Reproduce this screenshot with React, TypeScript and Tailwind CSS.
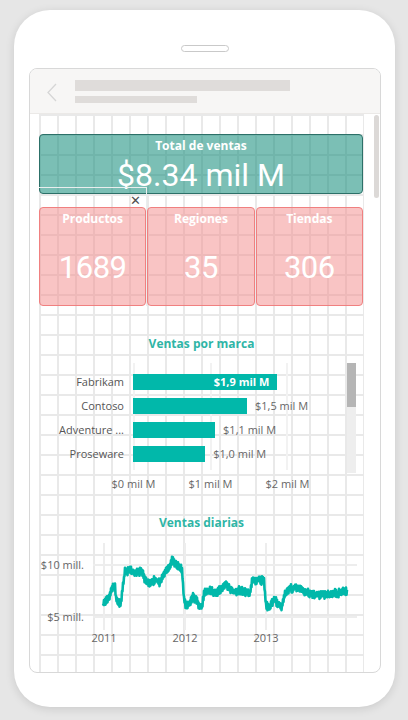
import React from "react";

const bars = [
  { name: "Fabrikam", value: 1.9, label: "$1,9 mil M" },
  { name: "Contoso", value: 1.5, label: "$1,5 mil M" },
  { name: "Adventure ...", value: 1.08, label: "$1,1 mil M" },
  { name: "Proseware", value: 0.95, label: "$1,0 mil M" },
];

const kpis = [
  { title: "Productos", value: "1689" },
  { title: "Regiones", value: "35" },
  { title: "Tiendas", value: "306" },
];

// rough shape of the daily sales line, in page pixels
const keys: [number, number][] = [
  [103, 604], [106, 601], [109, 598], [111, 592], [113, 586], [115, 588], [116, 598], [118, 603], [121, 603],
  [123, 585], [125, 572], [130, 570], [135, 573], [140, 571], [143, 574], [146, 581], [150, 584], [155, 580],
  [160, 583], [163, 576], [166, 571], [170, 566], [172, 559], [175, 563], [178, 566], [182, 570], [184, 600],
  [186, 606], [190, 603], [193, 597], [196, 600], [199, 606], [202, 607], [204, 593], [210, 591], [216, 593],
  [222, 588], [226, 584], [230, 589], [235, 592], [240, 590], [245, 592], [250, 593], [252, 580], [258, 580],
  [264, 581], [266, 605], [270, 607], [274, 599], [278, 604], [282, 607], [285, 592], [290, 589], [296, 587],
  [300, 589], [305, 592], [310, 594], [320, 595], [330, 594], [340, 593], [344, 590], [347, 593],
];

function buildLine() {
  let seed = 7;
  const rand = () => {
    seed = (seed * 16807) % 2147483647;
    return seed / 2147483647;
  };
  const pts: string[] = [];
  let k = 0;
  let flip = 1;
  for (let x = 103; x <= 347; x += 0.5) {
    while (k < keys.length - 2 && keys[k + 1][0] < x) k++;
    const [x0, y0] = keys[k];
    const [x1, y1] = keys[k + 1];
    const t = Math.min(1, Math.max(0, (x - x0) / (x1 - x0)));
    flip = -flip;
    const y = y0 + (y1 - y0) * t + flip * (1.2 + rand() * 2.5) + (rand() - 0.5) * 2;
    pts.push(`${(x - 39).toFixed(1)},${(y - 531).toFixed(1)}`);
  }
  return "M" + pts.join(" L");
}

const linePath = buildLine();

export default function App() {
  return (
    <div className="h-[720px] w-[408px] overflow-hidden bg-[#e6e6e6] pl-[14px] pt-[10px] font-['Open_Sans',sans-serif]">
      <div className="flex h-[697px] w-[381px] flex-col rounded-[36px] bg-white shadow-[0_2px_10px_rgba(0,0,0,0.12)]">
        <div className="mx-auto mt-[35px] h-[7px] w-[48px] rounded-full border border-[#c9c9c9] bg-white" />

        <div className="ml-[15px] mt-[16px] flex h-[605px] w-[352px] flex-col overflow-hidden rounded-[8px] border border-[#d8d8d8]">
          {/* header */}
          <div className="flex h-[45px] shrink-0 items-start border-b border-[#ebe9e7] bg-[#f7f6f5]">
            <svg width="12" height="20" viewBox="0 0 12 20" className="ml-[16px] mt-[14px]">
              <path d="M10 1 L2 9.5 L10 18" fill="none" stroke="#d6d6d6" strokeWidth="1.3" />
            </svg>
            <div className="ml-[17px] mt-[11px] flex flex-col gap-[5px]">
              <div className="h-[11px] w-[215px] bg-[#dfdcda]" />
              <div className="h-[7px] w-[122px] bg-[#dfdcda]" />
            </div>
          </div>

          {/* canvas */}
          <div className="relative flex-1 pl-[9px]">
            <div className="absolute right-[1px] top-[1px] h-[83px] w-[5px] rounded-full bg-[#dcd9d7]" />

            <div className="h-[560px] w-[325px] bg-[linear-gradient(to_right,#e9e9e9_2px,transparent_2px),linear-gradient(to_bottom,#e9e9e9_2px,transparent_2px)] bg-[length:18px_20px] pt-[20px]">
              {/* total card */}
              <div className="relative flex h-[60px] w-[324px] flex-col items-center rounded-[4px] border border-[#2c7068] bg-[#0e8a78]/55 pt-[3px] text-white">
                <span className="text-[12px] font-bold leading-[16px]">Total de ventas</span>
                <span className="mt-[6px] font-['Roboto',sans-serif] text-[32px] leading-[31px]">$8.34 mil M</span>
              </div>

              {/* kpi cards */}
              <div className="relative mt-[13px] grid w-[324px] grid-cols-3 gap-px">
                {kpis.map((k) => (
                  <div
                    key={k.title}
                    className="flex h-[99px] flex-col items-center rounded-[4px] border border-[#f08080] bg-[#f38989]/50 pt-[3px] text-white"
                  >
                    <span className="text-[12px] font-bold leading-[16px]">{k.title}</span>
                    <span className="mt-[23px] font-['Roboto',sans-serif] text-[31px] leading-[36px] tracking-[-0.5px]">{k.value}</span>
                  </div>
                ))}
                {/* focus box */}
                <div className="absolute -top-[20px] left-0 h-[119px] w-[108px] border-r border-t border-[#e9eeee]" />
                <span className="absolute -top-[13px] left-[91px] text-[13px] leading-[13px] text-[#505050]">✕</span>
              </div>

              {/* bar chart */}
              <div className="mt-[30px] text-center text-[12px] font-bold leading-[16px] text-[#2fb5a6]">Ventas por marca</div>
              <div className="relative mt-[11px] h-[113px]">
                <div className="absolute left-[94px] top-0 h-[107px] w-[2px] bg-[#f2f2f2]" />
                <div className="absolute left-[171px] top-0 h-[107px] w-[2px] bg-[#f2f2f2]" />
                <div className="absolute left-[247px] top-0 h-[107px] w-[2px] bg-[#f2f2f2]" />
                <div className="absolute left-[308px] top-0 h-[110px] w-[9px] bg-[#eeeeee]">
                  <div className="h-[44px] w-full bg-[#b5b5b5]" />
                </div>
                <div className="relative flex flex-col gap-[8px] pt-[11px]">
                  {bars.map((b, i) => (
                    <div key={b.name} className="flex h-[16px] items-center">
                      <span className="w-[85px] text-right text-[11px] text-[#555555]">{b.name}</span>
                      <div
                        className="ml-[9px] flex h-[16px] items-center justify-end bg-[#01b8aa] pr-[8px]"
                        style={{ width: b.value * 76 }}
                      >
                        {i === 0 && <span className="text-[11px] font-bold text-white">{b.label}</span>}
                      </div>
                      {i > 0 && <span className="ml-[8px] text-[11px] text-[#666666]">{b.label}</span>}
                    </div>
                  ))}
                </div>
              </div>
              <div className="ml-[56px] flex text-[11px] leading-[16px] text-[#666666]">
                <span className="w-[77px] text-center">$0 mil M</span>
                <span className="w-[77px] text-center">$1 mil M</span>
                <span className="w-[77px] text-center">$2 mil M</span>
              </div>

              {/* line chart */}
              <div className="mt-[23px] text-center text-[12px] font-bold leading-[16px] text-[#2fb5a6]">Ventas diarias</div>
              <svg width="325" height="125" viewBox="0 0 325 125" className="block">
                <line x1="54" y1="34" x2="318" y2="34" stroke="#ededed" strokeWidth="2" />
                <line x1="54" y1="86" x2="318" y2="86" stroke="#ededed" strokeWidth="2" />
                <line x1="65" y1="12" x2="65" y2="99" stroke="#ededed" strokeWidth="2" />
                <line x1="146" y1="12" x2="146" y2="99" stroke="#ededed" strokeWidth="2" />
                <line x1="227" y1="12" x2="227" y2="99" stroke="#ededed" strokeWidth="2" />
                <path d={linePath} fill="none" stroke="#01b8aa" strokeWidth="2.6" strokeLinejoin="round" />
                <g fontSize="11" fill="#666666" fontFamily="'Open Sans', sans-serif">
                  <text x="45" y="38" textAnchor="end">$10 mill.</text>
                  <text x="45" y="90" textAnchor="end">$5 mill.</text>
                  <text x="65" y="111" textAnchor="middle">2011</text>
                  <text x="146" y="111" textAnchor="middle">2012</text>
                  <text x="227" y="111" textAnchor="middle">2013</text>
                </g>
              </svg>
            </div>
          </div>
        </div>
      </div>
    </div>
  );
}
